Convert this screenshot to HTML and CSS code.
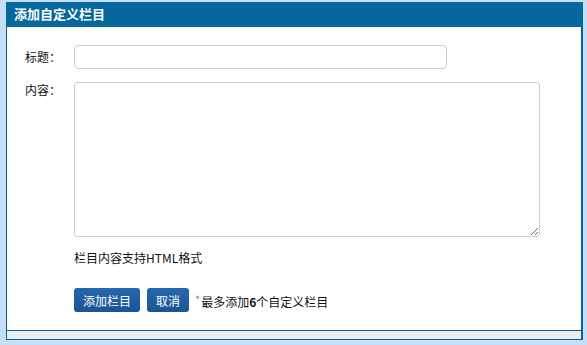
FILE: index.html
```html
<!DOCTYPE html>
<html lang="zh">
<head>
<meta charset="utf-8">
<title>添加自定义栏目</title>
<link rel="stylesheet" href="styles.css">
</head>
<body>
<div class="panel">
  <div class="panel-head">添加自定义栏目</div>
  <div class="panel-body">
    <div class="row row-title">
      <label class="label">标题：</label>
      <input class="input" type="text">
    </div>
    <div class="row row-content">
      <label class="label label-top">内容：</label>
      <div class="field">
        <textarea class="textarea"></textarea>
        <div class="hint">栏目内容支持HTML格式</div>
      </div>
    </div>
    <div class="row row-actions">
      <span class="label"></span>
      <div class="actions">
        <button class="btn">添加栏目</button>
        <button class="btn">取消</button>
        <span class="note"><span class="star">*</span>最多添加<b>6</b>个自定义栏目</span>
      </div>
    </div>
  </div>
  <div class="panel-foot"></div>
</div>
</body>
</html>
```
FILE: styles.css
```css
html, body {
  margin: 0;
  padding: 0;
  background: #c5dff8;
}
body {
  padding: 2px 0 0 6px;
  font-family: "Noto Sans CJK SC", "Noto Sans", sans-serif;
  font-size: 12px;
  color: #222;
}
.panel {
  width: 574px;
  border: 1px solid #0b6094;
  border-right-width: 2px;
  background: #fff;
}
.panel-head {
  height: 25px;
  line-height: 24px;
  background: #05679c;
  color: #fff;
  font-weight: bold;
  font-size: 13px;
  padding-left: 8px;
  margin: -1px -2px 0 -1px;
}
.panel-body {
  padding: 18px 0 18px 18px;
  display: flex;
  flex-direction: column;
  border-bottom: 1px solid #0b6094;
}
.row {
  display: flex;
  align-items: flex-start;
}
.label {
  width: 49px;
  flex: none;
  line-height: 24px;
  color: #111;
}
.label-top {
  line-height: 16px;
}
.row-title {
  align-items: center;
}
.input {
  width: 373px;
  height: 24px;
  box-sizing: border-box;
  border: 1px solid #ccc;
  border-radius: 4px;
  padding: 0 6px;
  margin: 0;
  font: inherit;
}
.row-content {
  margin-top: 13px;
}
.field {
  display: flex;
  flex-direction: column;
}
.textarea {
  width: 466px;
  height: 155px;
  box-sizing: border-box;
  border: 1px solid #ccc;
  border-radius: 3px;
  margin: 0;
  padding: 4px;
  font: inherit;
}
.hint {
  margin-top: 12px;
  line-height: 17px;
  color: #111;
}
.row-actions {
  margin-top: 22px;
}
.actions {
  display: flex;
  align-items: center;
  gap: 7px;
}
.btn {
  height: 24px;
  padding: 0 9px;
  border: none;
  border-radius: 3px;
  background: linear-gradient(#2468ad, #1a5595);
  color: #fff;
  font: inherit;
  font-size: 12px;
  margin: 0;
}
.note {
  margin-left: -1px;
  color: #111;
}
.note b {
  font-weight: bold;
}
.star {
  color: #888;
  font-size: 11px;
  vertical-align: 3px;
  margin-right: 1px;
}
.panel-foot {
  height: 8px;
  background: #eeeeee;
}
```
